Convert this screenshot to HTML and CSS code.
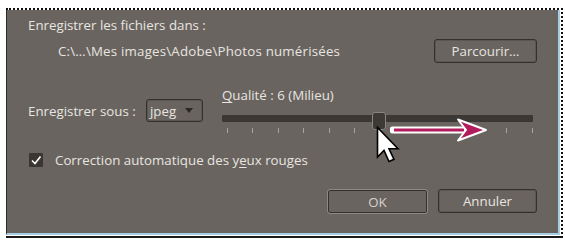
FILE: index.html
```html
<!DOCTYPE html>
<html lang="fr">
<head>
<meta charset="utf-8">
<link rel="stylesheet" href="styles.css">
</head>
<body>
<div class="frame">
  <div class="dialog">
    <div class="row1">Enregistrer les fichiers dans :</div>
    <div class="row2">
      <span class="path">C:\…\Mes images\Adobe\Photos numérisées</span>
      <button class="btn btn-browse">Parcourir…</button>
    </div>
    <div class="row3">
      <div class="format">
        <span class="lbl">Enre<u>g</u>istrer sous :</span>
        <span class="select"><span class="select-val">jpeg</span><span class="caret"></span></span>
      </div>
      <div class="slider">
        <div class="slider-label"><u>Q</u>ualité : 6 (Milieu)</div>
        <div class="track"><span class="thumb"></span></div>
        <div class="ticks">
          <i></i><i></i><i></i><i></i><i></i><i></i><i></i><i></i><i></i><i></i><i></i><i></i><i></i>
        </div>
        <svg class="arrow" width="100" height="26" viewBox="0 0 100 26">
          <line x1="3" y1="12" x2="74" y2="12" stroke="#fff" stroke-width="7" stroke-linecap="round"/>
          <line x1="4" y1="12" x2="74" y2="12" stroke="#b21c5c" stroke-width="3"/>
          <path d="M68,1.5 L96,12 L68,22.5 L76,12 Z" fill="#b21c5c" stroke="#fff" stroke-width="2" stroke-linejoin="round"/>
        </svg>
        <svg class="cursor" width="25" height="38" viewBox="0 0 25 38">
          <path d="M1.5,1.5 L1.5,31 L8,24.5 L13,35.5 L18,33.3 L13,22.8 L22,22.8 Z" fill="#fff" stroke="#000" stroke-width="1.6" stroke-linejoin="miter"/>
        </svg>
      </div>
    </div>
    <div class="row4">
      <span class="check"><svg width="14" height="14" viewBox="0 0 14 14"><polyline points="3,7.5 6,10.5 11.5,3.5" fill="none" stroke="#fff" stroke-width="1.6"/></svg></span>
      <span class="check-lbl">Correction automatique des y<u>e</u>ux rouges</span>
    </div>
    <div class="row5">
      <button class="btn btn-ok">OK</button>
      <button class="btn btn-cancel">Annuler</button>
    </div>
  </div>
</div>
</body>
</html>
```

FILE: styles.css
```css
html, body {
  margin: 0;
  padding: 0;
  background: #fff;
}
body {
  font-family: "Open Sans", "Lato", sans-serif;
  font-size: 13.3px;
  color: #e8e4e0;
}
.frame {
  margin: 8px 0 0 6px;
  width: 555px;
  border-top: 2px dotted #111;
  border-right: 2px dotted #111;
  border-bottom: 2px solid #1a1a1a;
}
.dialog {
  width: 509px;
  margin-right: 1px;
  margin-bottom: 1px;
  background: #69645f;
  border-left: 1px solid #2b2826;
  border-right: 2px solid #a6cde2;
  border-bottom: 2px solid #a6cde2;
  padding: 7px 21px 19px 21px;
  display: flex;
  flex-direction: column;
}
.row1 {
  line-height: 16px;
  height: 16px;
}
.row2 {
  margin-top: 6px;
  height: 24px;
  display: flex;
  align-items: center;
  justify-content: space-between;
}
.path {
  padding-left: 30px;
  letter-spacing: 0.2px;
}
.btn {
  font-family: inherit;
  font-size: 13.3px;
  color: #e8e4e0;
  background: #69645f;
  border: 1px solid #34302e;
  border-radius: 3px;
  box-shadow: inset 0 0 0 1px #5c5753;
  padding: 0;
  box-sizing: border-box;
}
.btn-browse {
  width: 103px;
  height: 24px;
}
.row3 {
  margin-top: 25px;
  display: flex;
}
.format {
  width: 194px;
  margin-top: 11px;
  display: flex;
  align-items: center;
  height: 23px;
}
.lbl {
  width: 118px;
}
.select {
  box-sizing: border-box;
  width: 57px;
  height: 23px;
  border: 1px solid #34302e;
  border-radius: 3px;
  box-shadow: inset 0 0 0 1px #5c5753;
  display: flex;
  align-items: center;
  justify-content: space-between;
  padding: 0 9px 0 3px;
}
.caret {
  width: 0;
  height: 0;
  border-left: 4px solid transparent;
  border-right: 4px solid transparent;
  border-top: 5px solid #2a2725;
}
.slider {
  position: relative;
  width: 311px;
}
.slider-label {
  line-height: 14px;
  height: 14px;
}
.track {
  position: relative;
  margin-top: 13px;
  height: 7px;
  background: #3b3735;
  border-radius: 1px;
}
.thumb {
  position: absolute;
  left: 150px;
  top: -3px;
  width: 14px;
  height: 18px;
  box-sizing: border-box;
  background: #3d3937;
  border: 1px solid #8a857f;
  border-radius: 3px;
}
.ticks {
  margin-top: 6px;
  height: 5px;
  display: flex;
  justify-content: space-between;
  padding-left: 5px;
}
.ticks i {
  width: 1px;
  height: 5px;
  background: #a9a4a0;
}
.arrow {
  position: absolute;
  left: 168px;
  top: 30px;
}
.cursor {
  position: absolute;
  left: 154px;
  top: 38px;
}
.row4 {
  margin-top: 20px;
  height: 14px;
  display: flex;
  align-items: center;
  padding-left: 1px;
}
.check {
  width: 14px;
  height: 14px;
  background: #3a3634;
  border-radius: 1px;
  display: block;
}
.check svg {
  display: block;
}
.check-lbl {
  margin-left: 12px;
  line-height: 14px;
}
.row5 {
  margin-top: 22px;
  height: 25px;
  display: flex;
  justify-content: flex-end;
  align-items: flex-start;
  gap: 10px;
}
.btn-ok {
  width: 101px;
  height: 25px;
  color: #d6d2ce;
  border: 1px solid #8e8984;
  box-shadow: inset 0 0 0 1px #34302e;
}
.btn-cancel {
  width: 99px;
  height: 24px;
}
u {
  text-decoration: underline;
  text-underline-offset: 2px;
}
```
